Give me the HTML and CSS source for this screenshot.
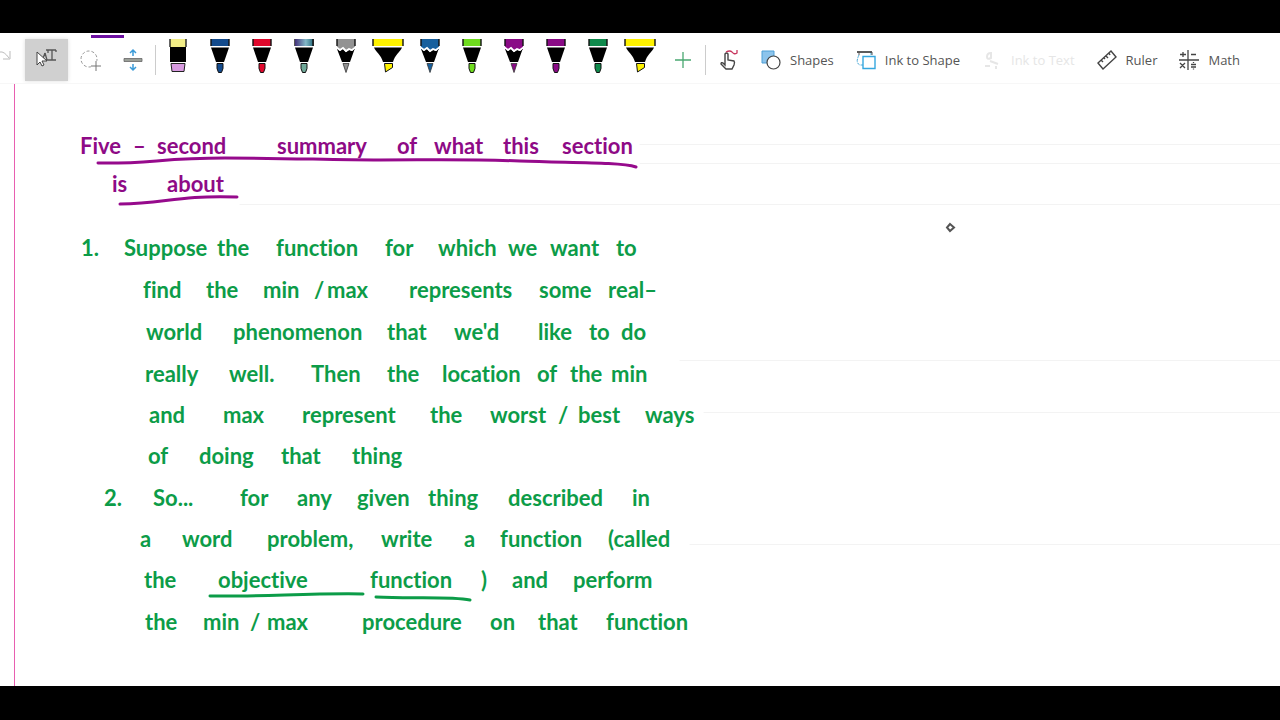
FILE: index.html
```
<!DOCTYPE html>
<html lang="en">
<head>
  <meta charset="UTF-8">
  <title>Section summary</title>
  <link rel="stylesheet" href="styles.css">
</head>
<body>

  <!-- pen shapes, coloured through currentColor -->
  <svg class="defs" aria-hidden="true">
    <symbol id="pen" viewBox="0 0 32 36">
      <path d="M7 1h18v7H7z" fill="currentColor"/>
      <path d="M7 1v7M25 1v7" stroke="#111" stroke-width="1.4"/>
      <path d="M7 9.500h18L20 24h-8z" fill="#000"/>
      <path d="M13 25.500h6v5l-1.500 4h-3L13 30.500z" fill="currentColor" stroke="#111" stroke-width="1"/>
    </symbol>
    <symbol id="pencil" viewBox="0 0 32 36">
      <path d="M7 1h18v11H7z" fill="currentColor"/>
      <path d="M7 1v7M25 1v7" stroke="#111" stroke-width="1.400"/>
      <path d="M7 11l3 2 3-2 3 3 3-2 3 1 3-3-5 14h-8z" fill="#000"/>
      <path d="M6 9l4 3 3-2 3 3 3-2 3 1 4-3" fill="none" stroke="#fff" stroke-width="1.800"/>
      <path d="M13 25.500h6L16 34.500z" fill="currentColor" stroke="#333" stroke-width=".8"/>
    </symbol>
    <symbol id="marker" viewBox="0 0 32 36">
      <path d="M1 1h30v7H1z" fill="currentColor"/>
      <path d="M1 1v7M31 1v7" stroke="#111" stroke-width="1.400"/>
      <path d="M2 9.500h28c-2 5-7 7-9 14.500H11C9 16.500 4 14.500 2 9.500z" fill="#000"/>
      <path d="M12.500 25.500h8v4l-7 4.500z" fill="currentColor" stroke="#111" stroke-width="1"/>
    </symbol>
  </svg>

  <header class="toolbar">
    <button class="tool edge" aria-label="Redo">
      <svg width="12" height="14" viewBox="0 0 12 14"><path d="M0 2q4-1 9 6M10 1v8H3" fill="none" stroke="#bbb"/></svg>
    </button>
    <button class="tool selected" aria-label="Select objects or type text">
      <svg width="26" height="24" viewBox="0 0 26 24">
        <path d="M12 4h10M12 14h10M18 4v10M14 4v3M22 4v2M11 7l-3 8M11 7l2 7" fill="none" stroke="#555" stroke-width="1.300"/>
        <path d="M3 6v13l3-3 2 4 2-1-2-4h5z" fill="#fff" stroke="#444"/>
      </svg>
    </button>
    <button class="tool tab" aria-label="Lasso select">
      <svg width="24" height="26" viewBox="0 0 24 26">
        <circle cx="11" cy="12" r="8" fill="none" stroke="#999" stroke-dasharray="3 2"/>
        <path d="M18 14v10M13 19h10" stroke="#fff" stroke-width="4"/><path d="M18 14v10M13 19h10" stroke="#777"/>
      </svg>
    </button>
    <button class="tool" aria-label="Insert space">
      <svg width="20" height="24" viewBox="0 0 20 24">
        <path d="M1 10.500h18v3H1z" fill="#9a9f98" stroke="#666" stroke-width=".8"/>
        <path d="M10 2v6M7 5l3-3 3 3M10 16v6M7 19l3 3 3-3" fill="none" stroke="#3b9bd8" stroke-width="1.500"/>
      </svg>
    </button>
    <span class="divider"></span>

    <button class="tool pen" aria-label="Eraser">
      <svg width="32" height="36" viewBox="0 0 32 36">
        <path d="M8 1h16v8H8z" fill="#f2ed86"/><path d="M8 1v8M24 1v8" stroke="#222" stroke-width="1.400"/>
        <path d="M8 9h16v15H8z" fill="#000"/>
        <path d="M9 25.500h14l-1 8H10z" fill="#d89be0" stroke="#222"/>
      </svg>
    </button>
    <button class="tool pen navy" aria-label="Navy pen"><svg width="32" height="36"><use href="#pen"/></svg></button>
    <button class="tool pen red" aria-label="Red pen"><svg width="32" height="36"><use href="#pen"/></svg></button>
    <button class="tool pen galaxy" aria-label="Galaxy pen">
      <svg width="32" height="36" viewBox="0 0 32 36">
        <linearGradient id="galaxy"><stop offset="0" stop-color="#43317a"/><stop offset=".6" stop-color="#83b9c8"/><stop offset="1" stop-color="#2b6f80"/></linearGradient>
        <use href="#pen"/><path d="M7 1h18v7H7z" fill="url(#galaxy)"/><path d="M25 1v7" stroke="#111" stroke-width="1.400"/>
      </svg>
    </button>
    <button class="tool pen grey" aria-label="Grey pencil"><svg width="32" height="36"><use href="#pencil"/></svg></button>
    <button class="tool pen yellow" aria-label="Yellow highlighter"><svg width="32" height="36"><use href="#marker"/></svg></button>
    <button class="tool pen blue" aria-label="Blue pencil"><svg width="32" height="36"><use href="#pencil"/></svg></button>
    <button class="tool pen lime" aria-label="Lime pen"><svg width="32" height="36"><use href="#pen"/></svg></button>
    <button class="tool pen purple" aria-label="Purple pencil"><svg width="32" height="36"><use href="#pencil"/></svg></button>
    <button class="tool pen purple" aria-label="Purple pen"><svg width="32" height="36"><use href="#pen"/></svg></button>
    <button class="tool pen green" aria-label="Green pen"><svg width="32" height="36"><use href="#pen"/></svg></button>
    <button class="tool pen yellow" aria-label="Yellow highlighter 2"><svg width="32" height="36"><use href="#marker"/></svg></button>

    <button class="tool" aria-label="Add pen">
      <svg width="18" height="18" viewBox="0 0 18 18"><path d="M9 1v16M1 9h16" stroke="#4aa871" stroke-width="1.300"/></svg>
    </button>
    <span class="divider"></span>
    <button class="tool" aria-label="Draw with touch">
      <svg width="20" height="22" viewBox="0 0 20 22">
        <path d="M6 13V5q1.500-2 3 0v6l6 1q1 1 0 4l-2 4H7l-5-5q0-2 2-1l2 2z" fill="#fff" stroke="#444" stroke-width="1.400"/>
        <path d="M7 3q4-2 6 0 2 3 5 1V1" fill="none" stroke="#c8375f" stroke-width="1.300"/>
      </svg>
    </button>

    <button class="tool labelled">
      <svg width="20" height="20" viewBox="0 0 20 20">
        <path d="M1 1h12v12H1z" fill="#8cc4ec" stroke="#4c9fd6"/><circle cx="12.500" cy="12.500" r="6.500" fill="#fff" stroke="#444" stroke-width="1.200"/>
      </svg>
      Shapes
    </button>
    <button class="tool labelled">
      <svg width="20" height="20" viewBox="0 0 20 20">
        <path d="M3 5q-4 8 1 10h3M15 2v4" fill="none" stroke="#49a9d8" stroke-dasharray="3 1"/>
        <path d="M1 2h15" stroke="#333" stroke-width="1.600"/><path d="M3 2v3M16 2v3" stroke="#555"/>
        <path d="M7 6.500h12v12H7z" fill="#fff" stroke="#35a7df" stroke-width="1.400"/>
      </svg>
      Ink to Shape
    </button>
    <button class="tool labelled" disabled>
      <svg width="20" height="20" viewBox="0 0 20 20"><path d="M5 7q0-4 4-4v5q-4 2-4-1M8 11l8 3M3 16h5M14 16v3" fill="none" stroke="currentColor" stroke-width="2"/></svg>
      Ink to Text
    </button>
    <button class="tool labelled">
      <svg width="20" height="20" viewBox="0 0 20 20"><path d="M1 13L14 1l5 6L6 19zM4 10l2 2M7 8l1 1M9 6l2 2M12 3l1 2" fill="none" stroke="#444" stroke-width="1.400"/></svg>
      Ruler
    </button>
    <button class="tool labelled">
      <svg width="20" height="20" viewBox="0 0 20 20"><path d="M9 0v20M0 10h20M4 2v5M1 4.500h6M12 4.500h5M1 13l5 5M6 13l-5 5M12 14.500h5M12 17h5M14.500 12v1M14.500 18.500v1" stroke="#444" stroke-width="1.300"/></svg>
      Math
    </button>
  </header>

  <main class="page">
    <!-- ink sits freely on the page, each word where it was written -->
    <svg class="ink" width="1280" height="602" viewBox="0 84 1280 602">
      <g class="rules">
        <path d="M640 144.500H1280M640 163.500H1280M240 204.500H1280M680 360.500H1280M704 412.500H1280M690 544.500H1280"/>
      </g>
      <g class="violet">
        <text y="154"><tspan x="80">Five</tspan> <tspan x="133">–</tspan> <tspan x="157">second</tspan> <tspan x="277">summary</tspan> <tspan x="397">of</tspan> <tspan x="434">what</tspan> <tspan x="503">this</tspan> <tspan x="562">section</tspan></text>
        <text y="192"><tspan x="112">is</tspan> <tspan x="167">about</tspan></text>
        <path d="M98 163C150 164 160 158 225 158S330 160 380 160 470 159 520 161 620 162 636 167M120 204C165 204 175 195 237 197"/>
      </g>
      <g class="emerald">
        <text y="256"><tspan x="81">1.</tspan> <tspan x="124">Suppose</tspan> <tspan x="217">the</tspan> <tspan x="276">function</tspan> <tspan x="385">for</tspan> <tspan x="438">which</tspan> <tspan x="508">we</tspan> <tspan x="550">want</tspan> <tspan x="616">to</tspan></text>
        <text y="298"><tspan x="143">find</tspan> <tspan x="206">the</tspan> <tspan x="263">min</tspan> <tspan x="314">/</tspan> <tspan x="327">max</tspan> <tspan x="409">represents</tspan> <tspan x="539">some</tspan> <tspan x="608">real–</tspan></text>
        <text y="340"><tspan x="146">world</tspan> <tspan x="233">phenomenon</tspan> <tspan x="387">that</tspan> <tspan x="454">we'd</tspan> <tspan x="538">like</tspan> <tspan x="589">to</tspan> <tspan x="621">do</tspan></text>
        <text y="382"><tspan x="145">really</tspan> <tspan x="229">well.</tspan> <tspan x="311">Then</tspan> <tspan x="387">the</tspan> <tspan x="442">location</tspan> <tspan x="537">of</tspan> <tspan x="570">the</tspan> <tspan x="611">min</tspan></text>
        <text y="423"><tspan x="149">and</tspan> <tspan x="223">max</tspan> <tspan x="302">represent</tspan> <tspan x="430">the</tspan> <tspan x="490">worst</tspan> <tspan x="558">/</tspan> <tspan x="578">best</tspan> <tspan x="645">ways</tspan></text>
        <text y="464"><tspan x="148">of</tspan> <tspan x="199">doing</tspan> <tspan x="281">that</tspan> <tspan x="352">thing</tspan></text>
        <text y="506"><tspan x="104">2.</tspan> <tspan x="153">So...</tspan> <tspan x="240">for</tspan> <tspan x="297">any</tspan> <tspan x="357">given</tspan> <tspan x="428">thing</tspan> <tspan x="508">described</tspan> <tspan x="632">in</tspan></text>
        <text y="547"><tspan x="140">a</tspan> <tspan x="182">word</tspan> <tspan x="267">problem,</tspan> <tspan x="381">write</tspan> <tspan x="464">a</tspan> <tspan x="500">function</tspan> <tspan x="608">(called</tspan></text>
        <text y="588"><tspan x="144">the</tspan> <tspan x="218">objective</tspan> <tspan x="370">function</tspan> <tspan x="481">)</tspan> <tspan x="512">and</tspan> <tspan x="573">perform</tspan></text>
        <text y="630"><tspan x="145">the</tspan> <tspan x="203">min</tspan> <tspan x="250">/</tspan> <tspan x="267">max</tspan> <tspan x="362">procedure</tspan> <tspan x="490">on</tspan> <tspan x="538">that</tspan> <tspan x="606">function</tspan></text>
        <path d="M210 596C260 597 310 593 363 594M376 597C410 599 450 596 470 600"/>
      </g>
      <path class="pointer" d="M950 224l4 3.500-4 3.500-3-3.500z"/>
    </svg>
  </main>

</body>
</html>
```
FILE: styles.css
```
* {
  box-sizing: border-box;
}

body {
  margin: 0;
  min-height: 100vh;
  display: flex;
  flex-direction: column;
  background: #fff;
  border-top: 33px solid #000;
  border-bottom: 34px solid #000;
  font-family: "Open Sans", sans-serif;
  overflow-x: hidden;
}

.defs {
  position: absolute;
  width: 0;
  height: 0;
}

.toolbar {
  display: flex;
  height: 51px;
  padding-bottom: 2px;
  border-bottom: 1px solid #f7f7f7;
  overflow: hidden;
}

.tool {
  flex: none;
  display: flex;
  align-items: center;
  justify-content: center;
  width: 43px;
  padding: 6px 0 0;
  border: none;
  background: none;
  color: #555;
  font: 13px "Open Sans", sans-serif;
}

.edge {
  width: 25px;
  justify-content: flex-start;
  padding: 0;
}

.selected {
  background: #d0d0d0;
  margin-top: 6px;
  padding: 0 0 4px;
  box-shadow: 0 0 4px #ddd;
}

.tab {
  position: relative;
}

/* marks the open ribbon tab */
.tab::before {
  content: "";
  position: absolute;
  top: 2px;
  left: 23px;
  width: 33px;
  height: 3px;
  background: #6c0fa0;
}

.pen {
  width: 42px;
  align-items: flex-start;
  padding-top: 5px;
}

.divider {
  flex: none;
  width: 1px;
  margin: 12px 1px 6px;
  background: #ccc;
}

.labelled {
  width: auto;
  gap: 9px;
  padding: 6px 11px 0;
}

.labelled:disabled {
  color: #e6e6e6;
}

.navy { color: #124a8c; }
.red { color: #e0082c; }
.galaxy { color: #6fa898; }
.grey { color: #929292; }
.yellow { color: #fff200; }
.blue { color: #17609e; }
.lime { color: #6fdc1e; }
.purple { color: #8a0a86; }
.green { color: #0f8a4c; }

.page {
  flex: 1;
  margin-left: 14px;
  border-left: 1px solid #e85fb0;
  overflow: hidden;
}

.ink {
  display: block;
  margin-left: -15px;
  font: bold 22px Lato, sans-serif;
  font-variant-ligatures: none;
}

.ink path {
  fill: none;
  stroke-width: 3;
  stroke-linecap: round;
}

.ink .rules path {
  stroke: #f3f3f3;
  stroke-width: 1;
}

.violet { fill: #8e0a86; }
.violet path { stroke: #960a8c; }

.emerald { fill: #0c9c48; }
.emerald path { stroke: #0c9c48; }

.ink .pointer {
  stroke: #555;
  stroke-width: 2;
}
```
